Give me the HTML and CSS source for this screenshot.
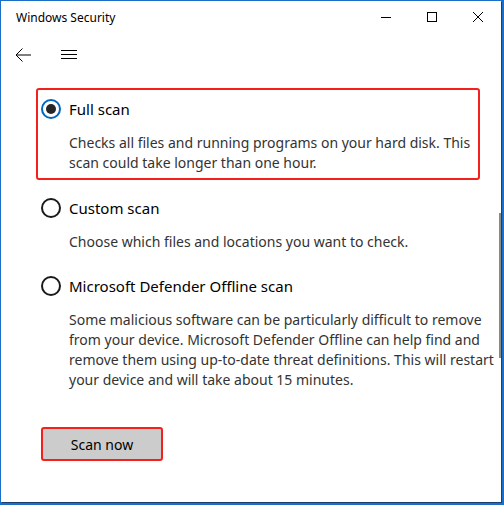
FILE: index.html
```html
<!DOCTYPE html>
<html lang="en">
<head>
<meta charset="utf-8">
<title>Windows Security</title>
<link rel="stylesheet" href="styles.css">
</head>
<body>
<div class="window">
  <div class="titlebar">
    <span class="title">Windows Security</span>
    <div class="caption-buttons">
      <span class="cap-btn">
        <svg width="10" height="10" viewBox="0 0 10 10"><path d="M0 5.5H10" stroke="#000" stroke-width="1"/></svg>
      </span>
      <span class="cap-btn">
        <svg width="10" height="10" viewBox="0 0 10 10"><rect x="0.5" y="0.5" width="9" height="9" fill="none" stroke="#000" stroke-width="1"/></svg>
      </span>
      <span class="cap-btn">
        <svg width="10" height="10" viewBox="0 0 10 10"><path d="M0 0L10 10M10 0L0 10" stroke="#000" stroke-width="1"/></svg>
      </span>
    </div>
  </div>

  <div class="navbar">
    <span class="nav-btn">
      <svg width="16" height="14" viewBox="0 0 16 14"><path d="M16 7H1M7.5 0.5L1 7L7.5 13.5" fill="none" stroke="#000" stroke-width="1"/></svg>
    </span>
    <span class="nav-btn">
      <svg width="16" height="10" viewBox="0 0 16 10"><path d="M0 0.5H16M0 4.5H16M0 8.5H16" stroke="#000" stroke-width="1"/></svg>
    </span>
  </div>

  <div class="content">
    <div class="option highlighted">
      <label class="radio-row">
        <span class="radio checked"></span>
        <span class="label">Full scan</span>
      </label>
      <p class="desc">Checks all files and running programs on your hard disk. This scan could take longer than one hour.</p>
    </div>

    <div class="option">
      <label class="radio-row">
        <span class="radio"></span>
        <span class="label">Custom scan</span>
      </label>
      <p class="desc">Choose which files and locations you want to check.</p>
    </div>

    <div class="option">
      <label class="radio-row">
        <span class="radio"></span>
        <span class="label">Microsoft Defender Offline scan</span>
      </label>
      <p class="desc">Some malicious software can be particularly difficult to remove from your device. Microsoft Defender Offline can help find and remove them using up-to-date threat definitions. This will restart your device and will take about 15 minutes.</p>
    </div>

    <div class="actions">
      <button class="scan-btn">Scan now</button>
    </div>
  </div>

  <div class="scrollbar"></div>
</div>
</body>
</html>
```

FILE: styles.css
```css
html, body {
  margin: 0;
  padding: 0;
}

body {
  background: #1b6fc6;
  width: 504px;
  height: 505px;
  overflow: hidden;
  padding: 1px 0 0 1px;
  box-sizing: border-box;
  font-family: "Noto Sans", "Open Sans", sans-serif;
}

.window {
  position: relative;
  width: 500px;
  height: 501px;
  background: #fff;
  box-shadow: 1px 1px 0 #1c3f6e;
  display: flex;
  flex-direction: column;
}

.titlebar {
  height: 32px;
  display: flex;
  align-items: center;
  justify-content: space-between;
}

.title {
  padding-left: 15px;
  font-size: 12px;
  color: #000;
}

.caption-buttons {
  display: flex;
  height: 100%;
}

.cap-btn {
  width: 46px;
  display: flex;
  align-items: center;
  justify-content: center;
}

.navbar {
  height: 44px;
  display: flex;
  align-items: center;
}

.nav-btn {
  width: 48px;
  height: 44px;
  display: flex;
  align-items: center;
  justify-content: center;
}

.nav-btn:first-child {
  width: 44px;
}

.content {
  padding: 11px 0 0 35px;
}

.option {
  width: 437px;
  border: 2px solid transparent;
  border-radius: 3px;
  padding: 9px 0 4px 3px;
}

.option + .option {
  margin-top: 7px;
}

.option.highlighted {
  border-color: #f3201b;
  padding-bottom: 5px;
}

.radio-row {
  display: flex;
  align-items: center;
  gap: 8px;
  height: 20px;
}

.radio {
  width: 20px;
  height: 20px;
  box-sizing: border-box;
  border: 2px solid #1a1a1a;
  border-radius: 50%;
  flex-shrink: 0;
  display: flex;
  align-items: center;
  justify-content: center;
}

.radio.checked {
  border-color: #0067c0;
}

.radio.checked::after {
  content: "";
  width: 10px;
  height: 10px;
  border-radius: 50%;
  background: #262626;
}

.label {
  font-size: 15px;
  color: #000;
  line-height: 20px;
}

.desc {
  margin: 14px 0 0 28px;
  width: 426px;
  font-size: 14px;
  line-height: 20px;
  color: #333;
}

.actions {
  padding: 31px 0 0 5px;
}

.scan-btn {
  width: 122px;
  height: 34px;
  background: #cccccc;
  border: 2px solid #f3201b;
  border-radius: 3px;
  font-family: inherit;
  font-size: 14px;
  color: #000;
  padding: 0;
}

.scrollbar {
  position: absolute;
  left: 498px;
  top: 212px;
  width: 2px;
  height: 145px;
  background: #8a8a8a;
}
```
